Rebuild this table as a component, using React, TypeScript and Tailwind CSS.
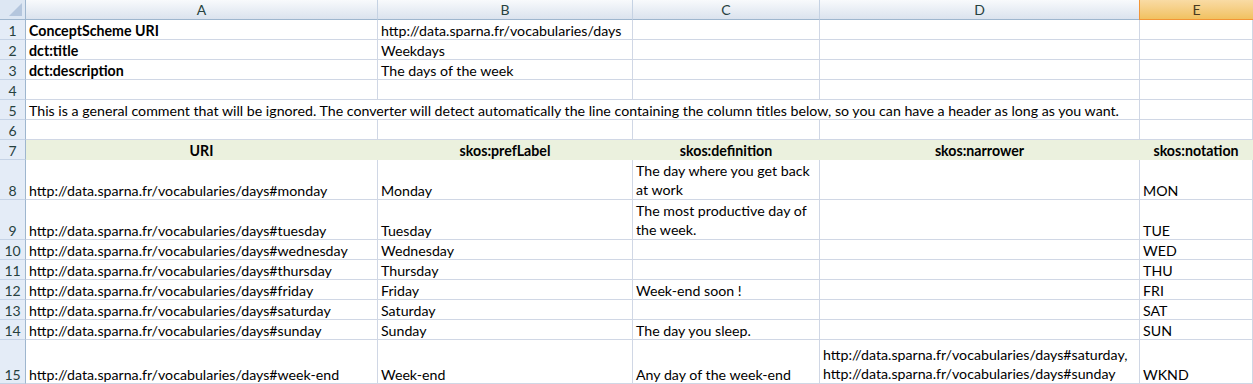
import React from "react";

type Cell = { text?: string; bold?: boolean; center?: boolean; wrap?: boolean; span?: number };
type Row = { n: number; h: string; cells: Cell[]; green?: boolean };

const base = "http://data.sparna.fr/vocabularies/days";

const rows: Row[] = [
  { n: 1, h: "h-[20px]", cells: [{ text: "ConceptScheme URI", bold: true }, { text: base }, {}, {}, {}] },
  { n: 2, h: "h-[20px]", cells: [{ text: "dct:title", bold: true }, { text: "Weekdays" }, {}, {}, {}] },
  { n: 3, h: "h-[20px]", cells: [{ text: "dct:description", bold: true }, { text: "The days of the week" }, {}, {}, {}] },
  { n: 4, h: "h-[20px]", cells: [{}, {}, {}, {}, {}] },
  {
    n: 5,
    h: "h-[20px]",
    cells: [
      {
        text: "This is a general comment that will be ignored. The converter will detect automatically the line containing the column titles below, so you can have a header as long as you want.",
        span: 4,
      },
      {},
    ],
  },
  { n: 6, h: "h-[20px]", cells: [{}, {}, {}, {}, {}] },
  {
    n: 7,
    h: "h-[20px]",
    green: true,
    cells: [
      { text: "URI", bold: true, center: true },
      { text: "skos:prefLabel", bold: true, center: true },
      { text: "skos:definition", bold: true, center: true },
      { text: "skos:narrower", bold: true, center: true },
      { text: "skos:notation", bold: true, center: true },
    ],
  },
  { n: 8, h: "h-[40px]", cells: [{ text: base + "#monday" }, { text: "Monday" }, { text: "The day where you get back at work", wrap: true }, {}, { text: "MON" }] },
  { n: 9, h: "h-[40px]", cells: [{ text: base + "#tuesday" }, { text: "Tuesday" }, { text: "The most productive day of the week.", wrap: true }, {}, { text: "TUE" }] },
  { n: 10, h: "h-[20px]", cells: [{ text: base + "#wednesday" }, { text: "Wednesday" }, {}, {}, { text: "WED" }] },
  { n: 11, h: "h-[20px]", cells: [{ text: base + "#thursday" }, { text: "Thursday" }, {}, {}, { text: "THU" }] },
  { n: 12, h: "h-[20px]", cells: [{ text: base + "#friday" }, { text: "Friday" }, { text: "Week-end soon !" }, {}, { text: "FRI" }] },
  { n: 13, h: "h-[20px]", cells: [{ text: base + "#saturday" }, { text: "Saturday" }, {}, {}, { text: "SAT" }] },
  { n: 14, h: "h-[20px]", cells: [{ text: base + "#sunday" }, { text: "Sunday" }, { text: "The day you sleep." }, {}, { text: "SUN" }] },
  {
    n: 15,
    h: "h-[44px]",
    cells: [
      { text: base + "#week-end" },
      { text: "Week-end" },
      { text: "Any day of the week-end" },
      { text: base + "#saturday, " + base + "#sunday", wrap: true },
      { text: "WKND" },
    ],
  },
];

const spanCls: Record<number, string> = { 1: "", 4: "col-span-4" };

const App = () => {
  return (
    <div
      className="w-[1253px] h-[384px] overflow-hidden bg-white text-black text-[14.2px]"
      style={{ fontFamily: "Lato, 'Liberation Sans', sans-serif" }}
    >
      <div className="grid grid-cols-[26px_352px_255px_187px_320px_1fr]">
        {/* column headers */}
        <div className="h-[20px] relative bg-[#dde7f3] border-r border-b border-[#9eb6ce]">
          <div className="absolute right-[3px] bottom-[3px] w-0 h-0 border-l-[13px] border-l-transparent border-b-[13px] border-b-[#b4c6dd]" />
        </div>
        {["A", "B", "C", "D"].map((c) => (
          <div
            key={c}
            className="h-[20px] flex items-center justify-center bg-gradient-to-b from-[#f8fafc] to-[#dbe3ee] border-r border-r-[#c5d2e3] border-b border-b-[#9eb6ce] text-[#27413e] text-[14px]"
          >
            {c}
          </div>
        ))}
        <div className="h-[20px] flex items-center justify-center bg-gradient-to-b from-[#f9dba4] to-[#f1c15f] border-b border-b-[#f29536] border-l border-l-[#f29536] -ml-px text-[#4a3a20] text-[14px]">
          E
        </div>

        {rows.map((r) => (
          <React.Fragment key={r.n}>
            <div
              className={`${r.h} flex items-end justify-center bg-[#e4ecf7] border-r border-r-[#9eb6ce] border-b border-b-[#c5d3e6] text-[#27413e] text-[14px] leading-[17px]`}
            >
              {r.n}
            </div>
            {r.cells.map((c, i) => (
              <div
                key={i}
                className={`${r.h} ${spanCls[c.span ?? 1]} flex items-end px-[3px] border-r border-b overflow-hidden ${
                  r.green ? "bg-[#ebf1de] border-[#ebf1de]" : "border-[#d0d7e5]"
                } ${c.center ? "justify-center" : ""} ${c.bold ? "font-bold" : ""} ${
                  c.wrap ? "whitespace-normal leading-[19px]" : "whitespace-nowrap leading-[17px]"
                }`}
              >
                {c.text ? <span>{c.text}</span> : null}
              </div>
            ))}
          </React.Fragment>
        ))}
      </div>
    </div>
  );
};

export default App;
